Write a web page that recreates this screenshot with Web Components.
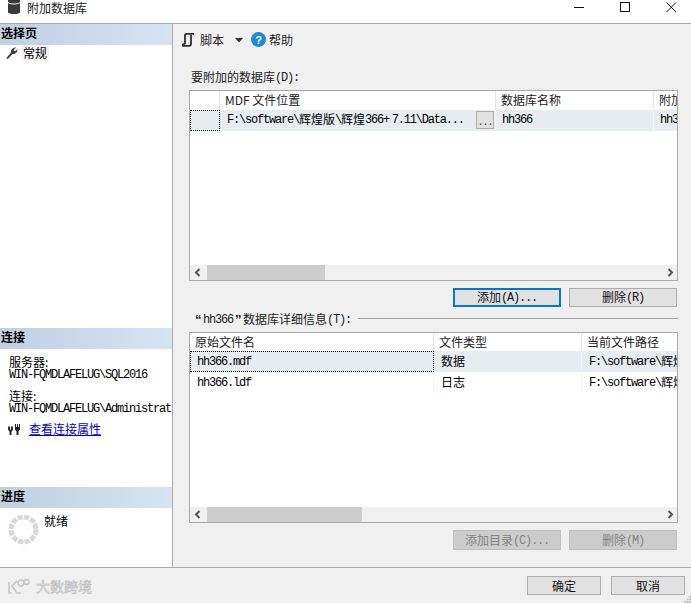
<!DOCTYPE html>
<html lang="zh">
<head>
<meta charset="utf-8">
<title>附加数据库</title>
<style>
	html, body { margin: 0; padding: 0; background: #f0f0f0; }
	body { width: 691px; height: 603px; overflow: hidden; font: 12px "Noto Sans CJK SC", "Liberation Sans", sans-serif; color: #000; }
</style>
</head>
<body>
<attach-dialog></attach-dialog>
<script>
const BASE = `
	*{ box-sizing: border-box; }
	.l{ font-family: "Liberation Mono", monospace; font-size: 12px; letter-spacing: -1.2px; vertical-align: 1px; }
`;

// ascii runs get the narrow mono look, the rest stays CJK
function mix(text){
	return text.replace(/[\x21-\x7e]+/g, function(m){
		return '<span class="l">' + m.replace(/&/g, "&amp;").replace(/</g, "&lt;") + '</span>';
	});
}

class titleBar extends HTMLElement{
	connectedCallback(){
		this.attachShadow({mode: 'open'}).innerHTML = `
		<style>
			${BASE}
			:host{ display: flex; height: 24px; background: #fff; border-bottom: 1px solid #aaa; padding-left: 8px; }
			svg{ display: block; }
			.ico{ width: 12px; height: 14px; margin-right: 7px; }
			.t{ flex: 1; line-height: 16px; color: #222; }
			.ctls{ display: flex; margin-right: -3px; height: 14px; align-items: flex-start; }
			.b{ width: 46px; height: 14px; padding-top: 2px; display: flex; justify-content: center; }
		</style>
		<svg class="ico" viewBox="0 0 12 14"><path d="M0 0H12V12C12 13.500 9 14 6 14S0 13.500 0 12Z" fill="#3a3a3a"/><path d="M0 2.500C2 4.500 10 4.500 12 2.500" fill="none" stroke="#fff"/></svg>
		<div class="t">附加数据库</div>
		<div class="ctls">
			<div class="b"><svg width="11" height="11"><path d="M0 5.500H10" stroke="#111"/></svg></div>
			<div class="b"><svg width="11" height="11"><rect x=".5" y=".5" width="9" height="9" fill="none" stroke="#111"/></svg></div>
			<div class="b"><svg width="11" height="11"><path d="M.5 .5L10 10M10 .5L.5 10" stroke="#111" fill="none"/></svg></div>
		</div>
		`;
	}
}

class sideSection extends HTMLElement{
	connectedCallback(){
		this.attachShadow({mode: 'open'}).innerHTML = `
		<style>
			${BASE}
			:host{ display: block; }
			.h{ height: 21px; line-height: 18px; padding-left: 1px; font-weight: 700; font-size: 12px; background: linear-gradient(90deg, #bfd0e0, #d6e4f2); }
		</style>
		<div class="h">${this.getAttribute("label")}</div>
		<slot></slot>
		`;
	}
}

class sidePane extends HTMLElement{
	connectedCallback(){
		this.attachShadow({mode: 'open'}).innerHTML = `
		<style>
			${BASE}
			:host{ display: flex; flex-direction: column; background: #fff; border-right: 1px solid #aaa; width: 173px; height: 543px; overflow: hidden; }
			side-section{ flex: none; }
			.s1{ height: 304px; }
			.s2{ height: 159px; }
			.s3{ height: 80px; }
			.page{ display: flex; align-items: flex-start; padding: 0 0 0 5px; height: 16px; }
			.page svg{ margin: 2px 3px 0 0; }
			.page span{ background: #f3f3f3; padding: 0 2px; line-height: 16px; }
			.info{ padding: 6px 0 0 9px; white-space: nowrap; overflow: hidden; }
			.info div{ height: 12px; line-height: 14px; }
			.info .gap{ height: 10px; }
			.link{ display: flex; padding: 9px 0 0 8px; height: 30px; }
			.link svg{ margin: 2px 8px 0 0; }
			a{ color: #0000d8; text-decoration: underline; line-height: 14px; }
			.prog{ display: flex; padding: 6px 0 0 8px; }
			.prog div{ margin-left: 5px; line-height: 14px; }
		</style>
		<side-section class="s1" label="选择页">
			<div class="page">
				<svg width="13" height="12" viewBox="0 0 13 12"><path d="M1 11.500L6 5.500C5.500 3 7.500 .5 11 .5L8.500 3L10 4.500L12.500 2C12.800 5 10 7.500 7.500 7L3 11.800Z" fill="#3c3c3c"/></svg>
				<span>常规</span>
			</div>
		</side-section>
		<side-section class="s2" label="连接">
			<div class="info">
				<div>服务器:</div>
				<div>${mix("WIN-FQMDLAFELUG\\SQL2016")}</div>
				<div class="gap"></div>
				<div>连接:</div>
				<div>${mix("WIN-FQMDLAFELUG\\Administrat")}</div>
			</div>
			<div class="link">
				<svg width="13" height="11" viewBox="0 0 13 11"><path d="M1 2.500V5.500L2.500 7.500M4 2.500V5.500L2.500 7.500V11" fill="none" stroke="#222" stroke-width="1.900"/><path d="M7.500 0V4M9.500 0V4M11.500 0V4" stroke="#222"/><path d="M7 3H12V5.500L10.500 7.500V11H8.500V7.500L7 5.500Z" fill="#222"/></svg>
				<a>查看连接属性</a>
			</div>
		</side-section>
		<side-section class="s3" label="进度">
			<div class="prog">
				<svg width="31" height="31" viewBox="0 0 31 31"><circle cx="15.500" cy="15.500" r="12.500" fill="none" stroke="#d9d9d9" stroke-width="5" stroke-dasharray="5.300 1.250"/></svg>
				<div>就绪</div>
			</div>
		</side-section>
		`;
	}
}

class uiButton extends HTMLElement{
	connectedCallback(){
		this.attachShadow({mode: 'open'}).innerHTML = `
		<style>
			${BASE}
			:host{ display: flex; width: 108px; height: 19px; align-items: center; justify-content: center; background: #e1e1e1; border: 1px solid #adadad; line-height: 16px; color: #111; white-space: pre; }
			:host([focused]){ border: 2px solid #0078d7; }
			:host([disabled]){ background: #cccccc; border-color: #bfbfbf; color: #838383; height: 20px; }
			:host([wide]){ width: 74px; }
		</style>
		<div>${mix(this.getAttribute("label"))}</div>
		`;
	}
}

class dataGrid extends HTMLElement{
	connectedCallback(){
		var cols = JSON.parse(this.getAttribute("cols"));
		var head = JSON.parse(this.getAttribute("head"));
		var rows = JSON.parse(this.getAttribute("rows"));
		var selector = this.hasAttribute("selector");
		var tpl = cols.map(function(c){ return c + "px"; }).join(" ");
		var myHTML = "";

		myHTML += '<div class="row hd" style="grid-template-columns:' + tpl + '">';
		head.forEach(function(h){ myHTML += '<div class="c">' + h + '</div>'; });
		myHTML += '</div>';

		rows.forEach(function(r, i){
			myHTML += '<div class="row' + (i === 0 ? ' sel' : '') + '" style="grid-template-columns:' + tpl + '">';
			r.forEach(function(t, j){
				var cls = "c";
				if (i === 0 && j === 0) { cls += " focus"; }
				if (selector && j === 1) {
					myHTML += '<div class="' + cls + ' pick"><span>' + mix(t) + '</span><b>...</b></div>';
				} else {
					myHTML += '<div class="' + cls + '">' + mix(t) + '</div>';
				}
			});
			myHTML += '</div>';
		});

		this.attachShadow({mode: 'open'}).innerHTML = `
		<style>
			${BASE}
			:host{ display: flex; flex-direction: column; width: 489px; height: 191px; border: 1px solid #a9a9a9; background: #fff; overflow: hidden; }
			.body{ flex: 1; overflow: hidden; }
			.row{ display: grid; white-space: nowrap; }
			.hd{ height: var(--hd, 19px); }
			.hd .c{ border-right: 1px solid #e4e4e4; line-height: 17px; padding-left: 5px; color: #222; overflow: hidden; }
			.row:not(.hd){ height: var(--rh, 21px); }
			.row:not(.hd) .c{ line-height: var(--lh, 18px); padding-left: var(--pad, 6px); overflow: hidden; border-right: 1px solid #f2f4f6; }
			.sel{ background: #e7ecf1; }
			.focus{ outline: 1px dotted #000; outline-offset: -1px; }
			.row:not(.hd) .pick{ display: flex; justify-content: space-between; padding-left: 7px; }
			.pick b{ flex: none; width: 18px; height: 18px; margin: 1px 1px 0 0; background: #e1e1e1; border: 1px solid #adadad; font-weight: 400; font-family: "Liberation Mono", monospace; font-size: 10px; letter-spacing: -1px; line-height: 21px; text-align: center; color: #333; }
			.sb{ flex: none; height: 15px; background: #f0f0f0; display: flex; align-items: center; padding: 0 3px 0 4px; justify-content: space-between; }
			.thumb{ flex: none; height: 15px; width: var(--thumb, 118px); background: #cdcdcd; margin-left: 6px; margin-right: auto; }
			svg{ display: block; flex: none; }
		</style>
		<div class="body">${myHTML}</div>
		<div class="sb">
			<svg width="7" height="9"><path d="M5.500 1L2 4.500L5.500 8" fill="none" stroke="#555" stroke-width="2"/></svg>
			<div class="thumb"></div>
			<svg width="7" height="9"><path d="M1.500 1L5 4.500L1.500 8" fill="none" stroke="#555" stroke-width="2"/></svg>
		</div>
		`;
	}
}

class attachDialog extends HTMLElement{
	connectedCallback(){
		var dbCols = JSON.stringify([30, 276, 158, 40]);
		var fileCols = JSON.stringify([244, 148, 120]);
		this.attachShadow({mode: 'open'}).innerHTML = `
		<style>
			${BASE}
			:host{ display: block; width: 691px; height: 603px; overflow: hidden; }
			.main{ display: flex; height: 543px; }
			.right{ flex: 1; padding: 0 13px 0 16px; background: #f0f0f0; }
			.tools{ height: 33px; margin-left: -7px; display: flex; align-items: flex-start; padding-top: 8px; line-height: 16px; color: #222; }
			.tools svg{ display: block; flex: none; }
			.lbl{ padding: 12px 0 0 2px; height: 33px; line-height: 16px; color: #222; }
			.btns{ display: flex; justify-content: flex-end; gap: 8px; padding: 7px 1px 0 0; }
			.group{ display: flex; align-items: center; gap: 7px; height: 25px; padding: 0 0 3px 6px; white-space: nowrap; color: #222; }
			.group i{ flex: 1; height: 1px; background: #a0a0a0; display: block; }
			.group b{ display: inline-block; font-weight: 700; font-size: 13px; font-family: "Liberation Sans", sans-serif; width: 8px; }
			.group b.e{ width: 10px; padding-left: 2px; }
			.grid2{ --hd: 18px; --rh: 21px; --thumb: 155px; --pad: 7px; --lh: 19px; }
			.foot{ display: flex; height: 36px; border-top: 1px solid #aaa; padding: 8px 6px 0 8px; gap: 10px; align-items: flex-start; position: relative; background: #f0f0f0; }
			.mark{ flex: 1; display: flex; align-items: center; gap: 2px; font-size: 14px; line-height: 17px; margin: 2px 0 0 -1px; color: #ececec; -webkit-text-stroke: .6px #bdbdbd; }
			.mark svg{ flex: none; }
			.grip{ position: absolute; right: 0; bottom: 0; }
		</style>
		<title-bar></title-bar>
		<div class="main">
			<side-pane></side-pane>
			<div class="right">
				<div class="tools">
					<svg width="12" height="14" viewBox="0 0 12 14" style="margin:1px 6px 0 0"><path d="M3.500 12.800H1C.5 12.800 .5 12 1 11.500L3 10.500V2.500C3 1.300 3.500 .9 4.500 .9H12M3.500 12.800H7C8.500 12.800 9 12 9 11V2" fill="none" stroke="#2e2e2e" stroke-width="1.800"/></svg>
					<span>脚本</span>
					<svg width="9" height="5" style="margin:6px 7px 0 11px"><path d="M0 0H8L4 4.500Z" fill="#333"/></svg>
					<svg width="15" height="15" viewBox="0 0 15 15" style="margin-right:3px"><circle cx="7.500" cy="7.500" r="7.500" fill="#1b8ad6"/><text x="7.500" y="11.500" text-anchor="middle" font-family="Liberation Sans" font-size="11" font-weight="700" fill="#fff">?</text></svg>
					<span>帮助</span>
				</div>
				<div class="lbl">要附加的数据库${mix("(D):")}</div>
				<data-grid selector cols='${dbCols}'
					head='["","MDF 文件位置","数据库名称","附加为"]'
					rows='[["","F:\\\\software\\\\辉煌版\\\\辉煌366+ 7.11\\\\Data...","hh366","hh366"]]'></data-grid>
				<div class="btns">
					<ui-button focused label="添加(A)..."></ui-button>
					<ui-button label="删除(R)"></ui-button>
				</div>
				<div class="group"><span><b>“</b>${mix("hh366")}<b class="e">”</b>数据库详细信息${mix("(T):")}</span><i></i></div>
				<data-grid class="grid2" cols='${fileCols}'
					head='["原始文件名","文件类型","当前文件路径"]'
					rows='[["hh366.mdf","数据","F:\\\\software\\\\辉煌版"],["hh366.ldf","日志","F:\\\\software\\\\辉煌版"]]'></data-grid>
				<div class="btns">
					<ui-button disabled label="添加目录(C)..."></ui-button>
					<ui-button disabled label="删除(M)"></ui-button>
				</div>
			</div>
		</div>
		<div class="foot">
			<div class="mark">
				<svg width="27" height="17" viewBox="0 0 27 17"><path d="M2 4V15H5M10 3L5 8L10 15H14M17 5A3 3 0 1 1 17 4.900M17 4A2.500 2.500 0 1 0 22 4A2.500 2.500 0 1 0 17 4" fill="none" stroke="#c6c6c6" stroke-width="1.600"/></svg>
				<span>大数跨境</span>
			</div>
			<ui-button wide label="确定"></ui-button>
			<ui-button wide label="取消"></ui-button>
			<svg class="grip" width="7" height="7"><path d="M5 0h2v2h-2zM2.500 2.500h2v2h-2zM5 2.500h2v2h-2zM0 5h2v2h-2zM2.500 5h2v2h-2zM5 5h2v2h-2z" fill="#c4c4c4"/></svg>
		</div>
		`;
	}
}

window.customElements.define("title-bar", titleBar);
window.customElements.define("side-section", sideSection);
window.customElements.define("side-pane", sidePane);
window.customElements.define("ui-button", uiButton);
window.customElements.define("data-grid", dataGrid);
window.customElements.define("attach-dialog", attachDialog);
</script>
</body>
</html>
